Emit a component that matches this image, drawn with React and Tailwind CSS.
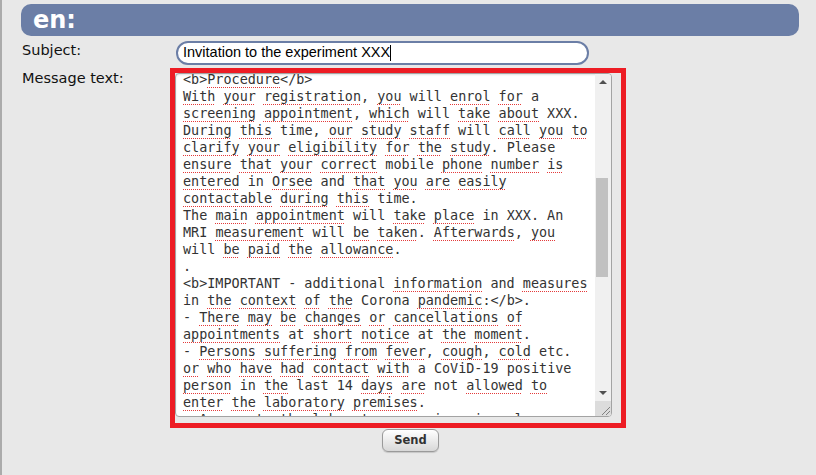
import React from 'react';

// "~" marks a word the spell checker has flagged
const lines = [
  '<b>~Procedure</b>',
  '~With ~your ~registration, ~you will ~enrol ~for a',
  '~screening ~appointment, ~which will ~take ~about XXX.',
  '~During ~this time, ~our ~study ~staff will ~call ~you ~to',
  '~clarify ~your ~eligibility ~for ~the ~study. Please',
  '~ensure ~that ~your ~correct mobile ~phone ~number ~is',
  '~entered in ~Orsee and ~that ~you ~are ~easily',
  '~contactable ~during ~this time.',
  'The ~main ~appointment will ~take ~place in XXX. An',
  'MRI ~measurement will ~be ~taken. ~Afterwards, ~you',
  'will ~be ~paid ~the ~allowance.',
  '.',
  '<b>IMPORTANT - additional ~information and ~measures',
  'in ~the ~context ~of ~the Corona ~pandemic:</b>.',
  '- ~There ~may ~be ~changes ~or ~cancellations ~of',
  '~appointments at ~short ~notice at ~the ~moment.',
  '- ~Persons ~suffering ~from ~fever, ~cough, ~cold etc.',
  '~or ~who ~have ~had ~contact ~with a CoViD-19 positive',
  '~person in ~the last 14 ~days ~are not ~allowed ~to',
  '~enter ~the ~laboratory ~premises.',
  '- ~Access ~to ~the ~laboratory ~premises ~is only',
];

const Line = ({ text }) => {
  const parts = text.split(/(~[A-Za-z]+)/g);
  return (
    <div className="h-[17px] whitespace-pre">
      {parts.map((p, i) =>
        p.startsWith('~') ? (
          <span
            key={i}
            className="underline decoration-dotted decoration-[#e43a3a] decoration-[1.2px] underline-offset-[3px]"
          >
            {p.slice(1)}
          </span>
        ) : (
          <span key={i}>{p}</span>
        )
      )}
    </div>
  );
};

const Scrollbar = () => (
  <div className="w-4 flex flex-col bg-[#f0f0f0]">
    <div className="h-[16px] flex items-center justify-center">
      <div className="w-0 h-0 border-l-[4px] border-r-[4px] border-b-[4px] border-l-transparent border-r-transparent border-b-[#505050]" />
    </div>
    <div className="flex-1 pt-[88px] pl-[1px] pr-[3px]">
      <div className="h-[99px] bg-[#c1c1c1]" />
    </div>
    <div className="h-[16px] flex items-center justify-center">
      <div className="w-0 h-0 border-l-[4px] border-r-[4px] border-t-[4px] border-l-transparent border-r-transparent border-t-[#505050]" />
    </div>
    <div className="h-[15px] bg-[#dcdcdc] flex items-end justify-end">
      <svg width="12" height="12" viewBox="0 0 12 12">
        <path d="M11 3 L3 11 M11 7 L7 11" stroke="#808080" strokeWidth="1" />
      </svg>
    </div>
  </div>
);

export default function App() {
  return (
    <div className="min-h-screen bg-[#e8e8e8] border-l-2 border-[#ababab] font-['DejaVu_Sans',sans-serif]">
      <div className="pt-1 pl-[19px] pr-[17px]">
        <div className="h-8 rounded-[10px] bg-[#6b7ea6] flex items-center pl-3">
          <h1 className="text-white font-bold text-[24px] leading-none">en:</h1>
        </div>
      </div>

      <div className="pl-[20px]">
        {/* Subject */}
        <div className="flex mt-[5px]">
          <label className="w-[148px] text-[14.5px] leading-[18px] text-[#111]">Subject:</label>
          <div className="ml-[6px] w-[413px] h-6 rounded-xl border-2 border-[#6b7ea6] bg-white flex items-center pl-[5px] font-['Liberation_Sans',Arial,sans-serif] text-[14.5px] text-black">
            <span>Invitation to the experiment XXX</span>
            <span className="inline-block w-px h-[16px] bg-black" />
          </div>
        </div>

        {/* Message text */}
        <div className="flex mt-[3px]">
          <label className="w-[148px] pt-[1px] text-[14.5px] leading-[18px] text-[#111]">Message text:</label>
          <div className="w-[456px] h-[360px] border-[5px] border-[#ed1c24] pr-[9px] pb-[6px]">
            <div className="h-full rounded-[4px] border border-[#a3a3a3] bg-white flex overflow-hidden shadow-[inset_0_1px_2px_rgba(0,0,0,0.12)]">
              <div className="flex-1 overflow-hidden pl-[7px] font-['DejaVu_Sans_Mono',monospace] text-[13.45px] leading-[17px] text-[#333]">
                <div className="-mt-[3px]">
                  {lines.map((l, i) => (
                    <Line key={i} text={l} />
                  ))}
                </div>
              </div>
              <Scrollbar />
            </div>
          </div>
        </div>

        <div className="-mt-px ml-[360px]">
          <button className="w-[57px] h-[23px] rounded-[6px] border border-[#9a9a9a] bg-gradient-to-b from-white to-[#d8d8d8] text-[11.5px] font-bold text-[#333] shadow-[0_1px_1px_rgba(0,0,0,0.15)]">
            Send
          </button>
        </div>
      </div>
    </div>
  );
}
